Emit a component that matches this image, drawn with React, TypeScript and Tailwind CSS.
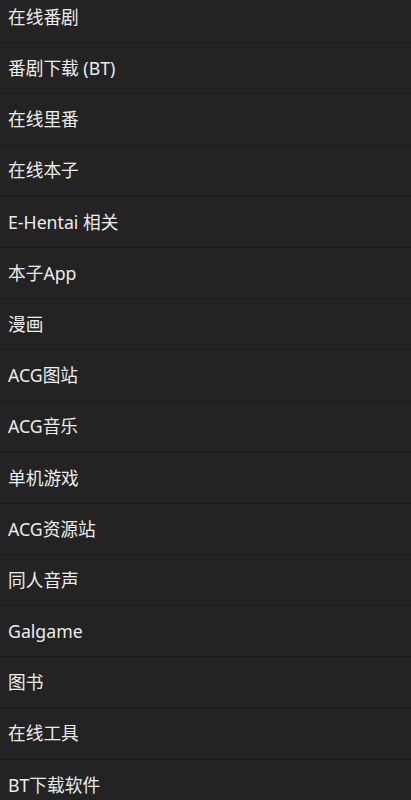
import React from "react";

const items = [
  "在线番剧",
  "番剧下载 (BT)",
  "在线里番",
  "在线本子",
  "E-Hentai 相关",
  "本子App",
  "漫画",
  "ACG图站",
  "ACG音乐",
  "单机游戏",
  "ACG资源站",
  "同人音声",
  "Galgame",
  "图书",
  "在线工具",
  "BT下载软件",
];

export default function App() {
  return (
    <div
      className="relative w-[411px] h-[800px] overflow-hidden bg-[#232323]"
      style={{ fontFamily: '"Noto Sans", "Noto Sans CJK SC", sans-serif' }}
    >
      <div className="flex flex-col mt-[-8px]">
        {items.map((t) => (
          <div
            key={t}
            className="h-[51.2px] shrink-0 flex items-center px-[8px] border-b border-[#1b1b1b] text-[17.7px] text-[#ececec]"
          >
            {t}
          </div>
        ))}
      </div>
    </div>
  );
}
